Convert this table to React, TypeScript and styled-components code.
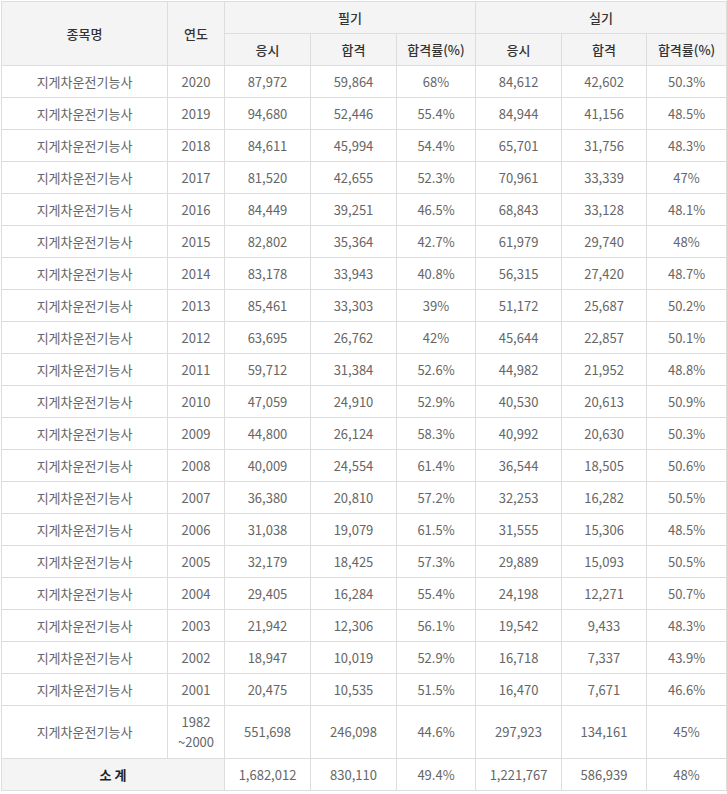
import { createGlobalStyle, styled } from "styled-components";

const GlobalStyle = createGlobalStyle`
  body {
    margin: 0;
    background: #fff;
    font-family: "Noto Sans CJK KR", "Noto Sans", sans-serif;
  }
`;

type Row = [string, string, string, string, string, string, string];

const rows: Row[] = [
  ["2020", "87,972", "59,864", "68%", "84,612", "42,602", "50.3%"],
  ["2019", "94,680", "52,446", "55.4%", "84,944", "41,156", "48.5%"],
  ["2018", "84,611", "45,994", "54.4%", "65,701", "31,756", "48.3%"],
  ["2017", "81,520", "42,655", "52.3%", "70,961", "33,339", "47%"],
  ["2016", "84,449", "39,251", "46.5%", "68,843", "33,128", "48.1%"],
  ["2015", "82,802", "35,364", "42.7%", "61,979", "29,740", "48%"],
  ["2014", "83,178", "33,943", "40.8%", "56,315", "27,420", "48.7%"],
  ["2013", "85,461", "33,303", "39%", "51,172", "25,687", "50.2%"],
  ["2012", "63,695", "26,762", "42%", "45,644", "22,857", "50.1%"],
  ["2011", "59,712", "31,384", "52.6%", "44,982", "21,952", "48.8%"],
  ["2010", "47,059", "24,910", "52.9%", "40,530", "20,613", "50.9%"],
  ["2009", "44,800", "26,124", "58.3%", "40,992", "20,630", "50.3%"],
  ["2008", "40,009", "24,554", "61.4%", "36,544", "18,505", "50.6%"],
  ["2007", "36,380", "20,810", "57.2%", "32,253", "16,282", "50.5%"],
  ["2006", "31,038", "19,079", "61.5%", "31,555", "15,306", "48.5%"],
  ["2005", "32,179", "18,425", "57.3%", "29,889", "15,093", "50.5%"],
  ["2004", "29,405", "16,284", "55.4%", "24,198", "12,271", "50.7%"],
  ["2003", "21,942", "12,306", "56.1%", "19,542", "9,433", "48.3%"],
  ["2002", "18,947", "10,019", "52.9%", "16,718", "7,337", "43.9%"],
  ["2001", "20,475", "10,535", "51.5%", "16,470", "7,671", "46.6%"],
];

const widths = [166, 57, 86, 86, 79, 86, 85, 80];

const NAME = "지게차운전기능사";

export default function App() {
  return (
    <>
      <GlobalStyle />
      <Wrap>
        <Table>
          <colgroup>
            {widths.map((w, i) => (
              <col key={i} style={{ width: w }} />
            ))}
          </colgroup>
          <thead>
            <HeadRow>
              <Th rowSpan={2}>종목명</Th>
              <Th rowSpan={2}>연도</Th>
              <Th colSpan={3}>필기</Th>
              <Th colSpan={3}>실기</Th>
            </HeadRow>
            <HeadRow>
              <Th>응시</Th>
              <Th>합격</Th>
              <Th>합격률(%)</Th>
              <Th>응시</Th>
              <Th>합격</Th>
              <Th>합격률(%)</Th>
            </HeadRow>
          </thead>
          <tbody>
            {rows.map((r) => (
              <BodyRow key={r[0]}>
                <Td>{NAME}</Td>
                {r.map((v, i) => (
                  <Td key={i}>{v}</Td>
                ))}
              </BodyRow>
            ))}
            <BodyRow $tall>
              <Td>{NAME}</Td>
              <Td>
                1982
                <br />
                ~2000
              </Td>
              <Td>551,698</Td>
              <Td>246,098</Td>
              <Td>44.6%</Td>
              <Td>297,923</Td>
              <Td>134,161</Td>
              <Td>45%</Td>
            </BodyRow>
            <BodyRow>
              <TotalCell colSpan={2}>소 계</TotalCell>
              <Td>1,682,012</Td>
              <Td>830,110</Td>
              <Td>49.4%</Td>
              <Td>1,221,767</Td>
              <Td>586,939</Td>
              <Td>48%</Td>
            </BodyRow>
          </tbody>
        </Table>
      </Wrap>
    </>
  );
}

const Wrap = styled.div`
  padding: 1px 1px 0 1px;
`;

const Table = styled.table`
  width: 725px;
  table-layout: fixed;
  border-collapse: collapse;
  font-size: 13px;
  line-height: 18px;
`;

const HeadRow = styled.tr`
  height: 32px;
`;

const Th = styled.th`
  border: 1px solid #dddddd;
  background: #f4f4f4;
  color: #333;
  font-weight: 500;
  text-align: center;
  padding: 0;
`;

const BodyRow = styled.tr<{ $tall?: boolean }>`
  height: ${(p) => (p.$tall ? "53px" : "32px")};
`;

const Td = styled.td`
  border: 1px solid #dddddd;
  color: #666;
  text-align: center;
  padding: 0;
  line-height: 20px;
`;

const TotalCell = styled.td`
  border: 1px solid #dddddd;
  background: #f4f4f4;
  color: #222;
  font-weight: 700;
  text-align: center;
  padding: 0;
`;
